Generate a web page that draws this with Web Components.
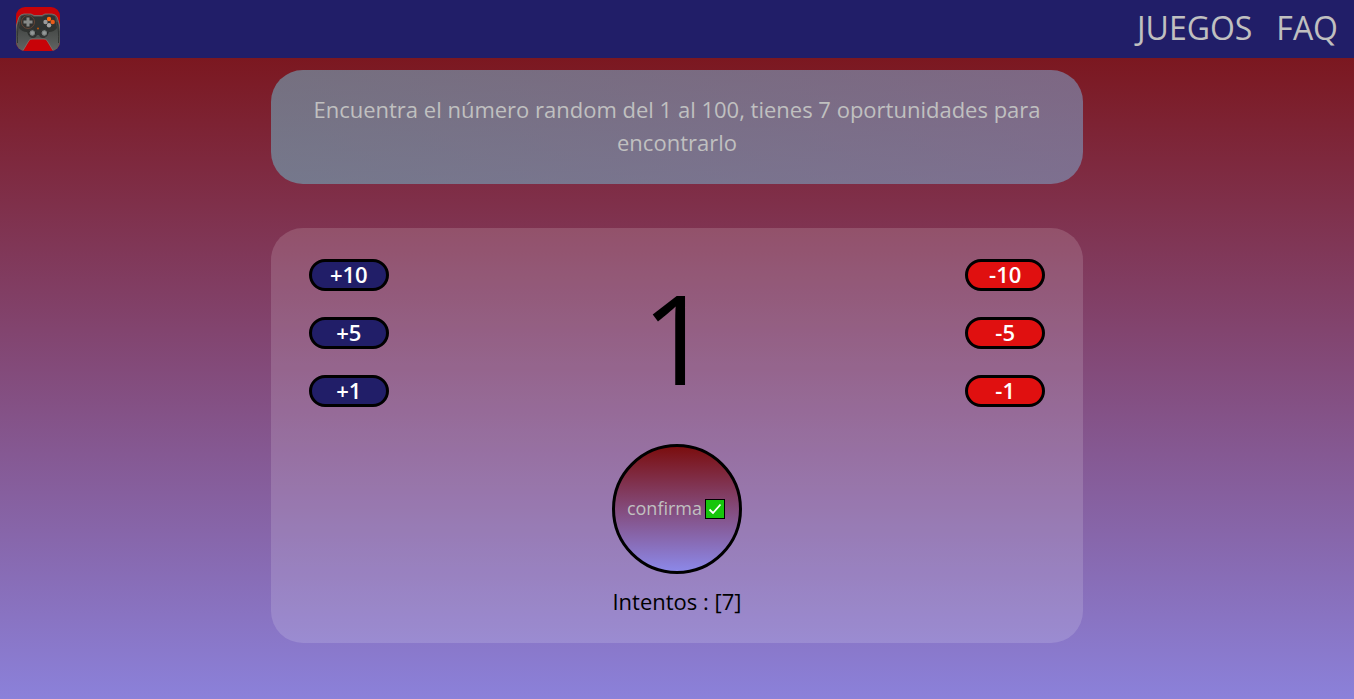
<!DOCTYPE html>
<html lang="es">
<head>
<meta charset="utf-8">
<title>Número random</title>
<style>
html { min-height: 100%; background: linear-gradient(#7a0e0f, #8b81da) no-repeat; }
body { margin: 0; font-family: "Open Sans", "Noto Sans", sans-serif; color: #000; }
</style>
</head>
<body>
<guess-app></guess-app>
<script>
const define = (name, html, setup) => {
  const template = document.createElement('template');
  template.innerHTML = html;
  customElements.define(name, class extends HTMLElement {
    constructor() {
      super();
      this.attachShadow({ mode: 'open' }).append(template.content.cloneNode(true));
    }
    connectedCallback() { if (setup) setup(this, this.shadowRoot); }
  });
};

define('game-logo', `
<style>
:host { display: block; width: 44px; height: 44px; }
svg { display: block; width: 100%; height: 100%; }
</style>
<svg viewBox="0 0 44 44" role="img" aria-label="Mando">
  <defs>
    <linearGradient id="g" x1="0" y1="0" x2="0" y2="1"><stop offset="0" stop-color="#4a4c49"/><stop offset=".4" stop-color="#474a48"/><stop offset="1" stop-color="#636766"/></linearGradient>
    <clipPath id="c"><rect width="44" height="44" rx="9"/></clipPath>
  </defs>
  <rect width="44" height="44" rx="9" fill="#c80308"/>
  <g clip-path="url(#c)">
    <path d="M3 10Q4 7.500 8 7H15L18 8.500H26L29 7H36Q40 7.500 41 10Q44 17 45 28V46H38.500L31 33.500Q30 32 28 32H16Q14 32 13 33.500L5.500 46H-1V28Q0 17 3 10Z" fill="url(#g)" stroke="#7b7a72" stroke-width=".8"/>
    <path d="M5 9.500Q12 6 18 10H26Q32 6 39 9.500L41 21Q38 25 33 25Q31 31 27 31Q24 31 23 28H21Q20 31 17 31Q13 31 11 25Q6 25 3 21Z" fill="#303331"/>
    <path d="M3 15Q1 22 1.500 36M41 15Q43 22 42.500 36" fill="none" stroke="#333634" stroke-width="1"/>
    <circle cx="12" cy="15" r="6.500" fill="#30302e" stroke="#6b4a38" stroke-width=".9"/>
    <path d="M10.500 10.500h3v3h3v3h-3v3h-3v-3h-3v-3h3z" fill="#878a88"/>
    <circle cx="33" cy="12" r="2.200" fill="#ff680d"/><circle cx="36.700" cy="15" r="2.200" fill="#e95b19"/>
    <circle cx="29.500" cy="15" r="2.200" fill="#9b9b9a"/><circle cx="33" cy="18.300" r="2.200" fill="#a7a6a5"/>
    <circle cx="22" cy="21.500" r="1.100" fill="#b5540e"/>
    <circle cx="16.300" cy="26" r="3.400" fill="#777c7b" stroke="#272928" stroke-width="1"/><circle cx="28.300" cy="26" r="3.400" fill="#777c7b" stroke="#272928" stroke-width="1"/>
    <circle cx="16.300" cy="26" r="1.700" fill="#949998"/><circle cx="28.300" cy="26" r="1.700" fill="#949998"/>
  </g>
</svg>`);

define('site-header', `
<style>
:host { display: flex; align-items: center; justify-content: space-between; height: 58px; padding: 0 16px; box-sizing: border-box; background: #211e68; }
nav { display: flex; gap: 24px; padding-bottom: 2px; font-size: 32px; font-weight: 500; line-height: 44px; }
::slotted(a) { color: silver; text-decoration: none; }
</style>
<game-logo></game-logo>
<nav><slot></slot></nav>`);

define('info-banner', `
<style>
:host { display: block; padding: 23px 40px 25px; border-radius: 32px; background: linear-gradient(45deg, rgba(111,171,188,.6), rgba(127,155,195,.6)); color: silver; text-align: center; font-size: 22px; line-height: 33px; }
p { margin: 0; }
</style>
<p><slot></slot></p>`);

define('step-button', `
<style>
:host { display: block; --fill: #211e68; }
:host([step^="-"]) { --fill: #e01010; }
button { display: block; width: 80px; height: 32px; padding: 0 0 2px; border: 3px solid #000; border-radius: 16px; background: var(--fill); color: #fff; font: 600 22px/24px "Open Sans", "Noto Sans", sans-serif; cursor: pointer; }
</style>
<button type="button"></button>`, (host, root) => {
  const button = root.querySelector('button');
  const step = host.getAttribute('step');
  button.textContent = step;
  button.onclick = () => host.dispatchEvent(new CustomEvent('step', { detail: Number(step), bubbles: true, composed: true }));
});

define('confirm-button', `
<style>
:host { display: block; }
button { display: flex; align-items: center; justify-content: center; gap: 3px; width: 130px; height: 130px; padding: 0 2px 0 0; border: 3px solid #000; border-radius: 50%; background: linear-gradient(#7b0e0f, #8c88e8); color: silver; font: 18px/24px "Open Sans", "Noto Sans", sans-serif; cursor: pointer; }
span { padding-bottom: 2px; }
svg { width: 20px; height: 20px; }
</style>
<button type="button"><span><slot></slot></span><svg viewBox="0 0 20 20" aria-hidden="true"><rect x=".5" y=".5" width="19" height="19" fill="#16c60c" stroke="#000"/><path d="M4.500 10.500L8 14L15.500 5.500" fill="none" stroke="#fff" stroke-width="1.800"/></svg></button>`);

define('guess-game', `
<style>
:host { display: flex; flex-direction: column; align-items: center; padding: 31px 38px 25px; border-radius: 32px; background: rgba(255,255,255,.15); }
.board { display: flex; justify-content: space-between; align-self: stretch; }
.steps { display: grid; gap: 26px; align-content: start; }
output { font-size: 124px; line-height: 156px; }
confirm-button { margin-top: 29px; }
p { margin: 11px 0 0; font-size: 22px; line-height: 33px; }
</style>
<div class="board">
  <div class="steps"><step-button step="+10"></step-button><step-button step="+5"></step-button><step-button step="+1"></step-button></div>
  <output aria-label="Número">1</output>
  <div class="steps"><step-button step="-10"></step-button><step-button step="-5"></step-button><step-button step="-1"></step-button></div>
</div>
<confirm-button>confirma</confirm-button>
<p>Intentos : [7]</p>`, (host, root) => {
  const output = root.querySelector('output');
  root.addEventListener('step', e => {
    output.textContent = Math.min(100, Math.max(1, Number(output.textContent) + e.detail));
  });
});

define('guess-app', `
<style>
:host { display: block; }
main { display: grid; gap: 44px; width: 60%; margin: 12px auto 0; }
</style>
<site-header><a href="#juegos">JUEGOS</a><a href="#faq">FAQ</a></site-header>
<main>
  <info-banner>Encuentra el número random del 1 al 100, tienes 7 oportunidades para encontrarlo</info-banner>
  <guess-game></guess-game>
</main>`);
</script>
</body>
</html>
